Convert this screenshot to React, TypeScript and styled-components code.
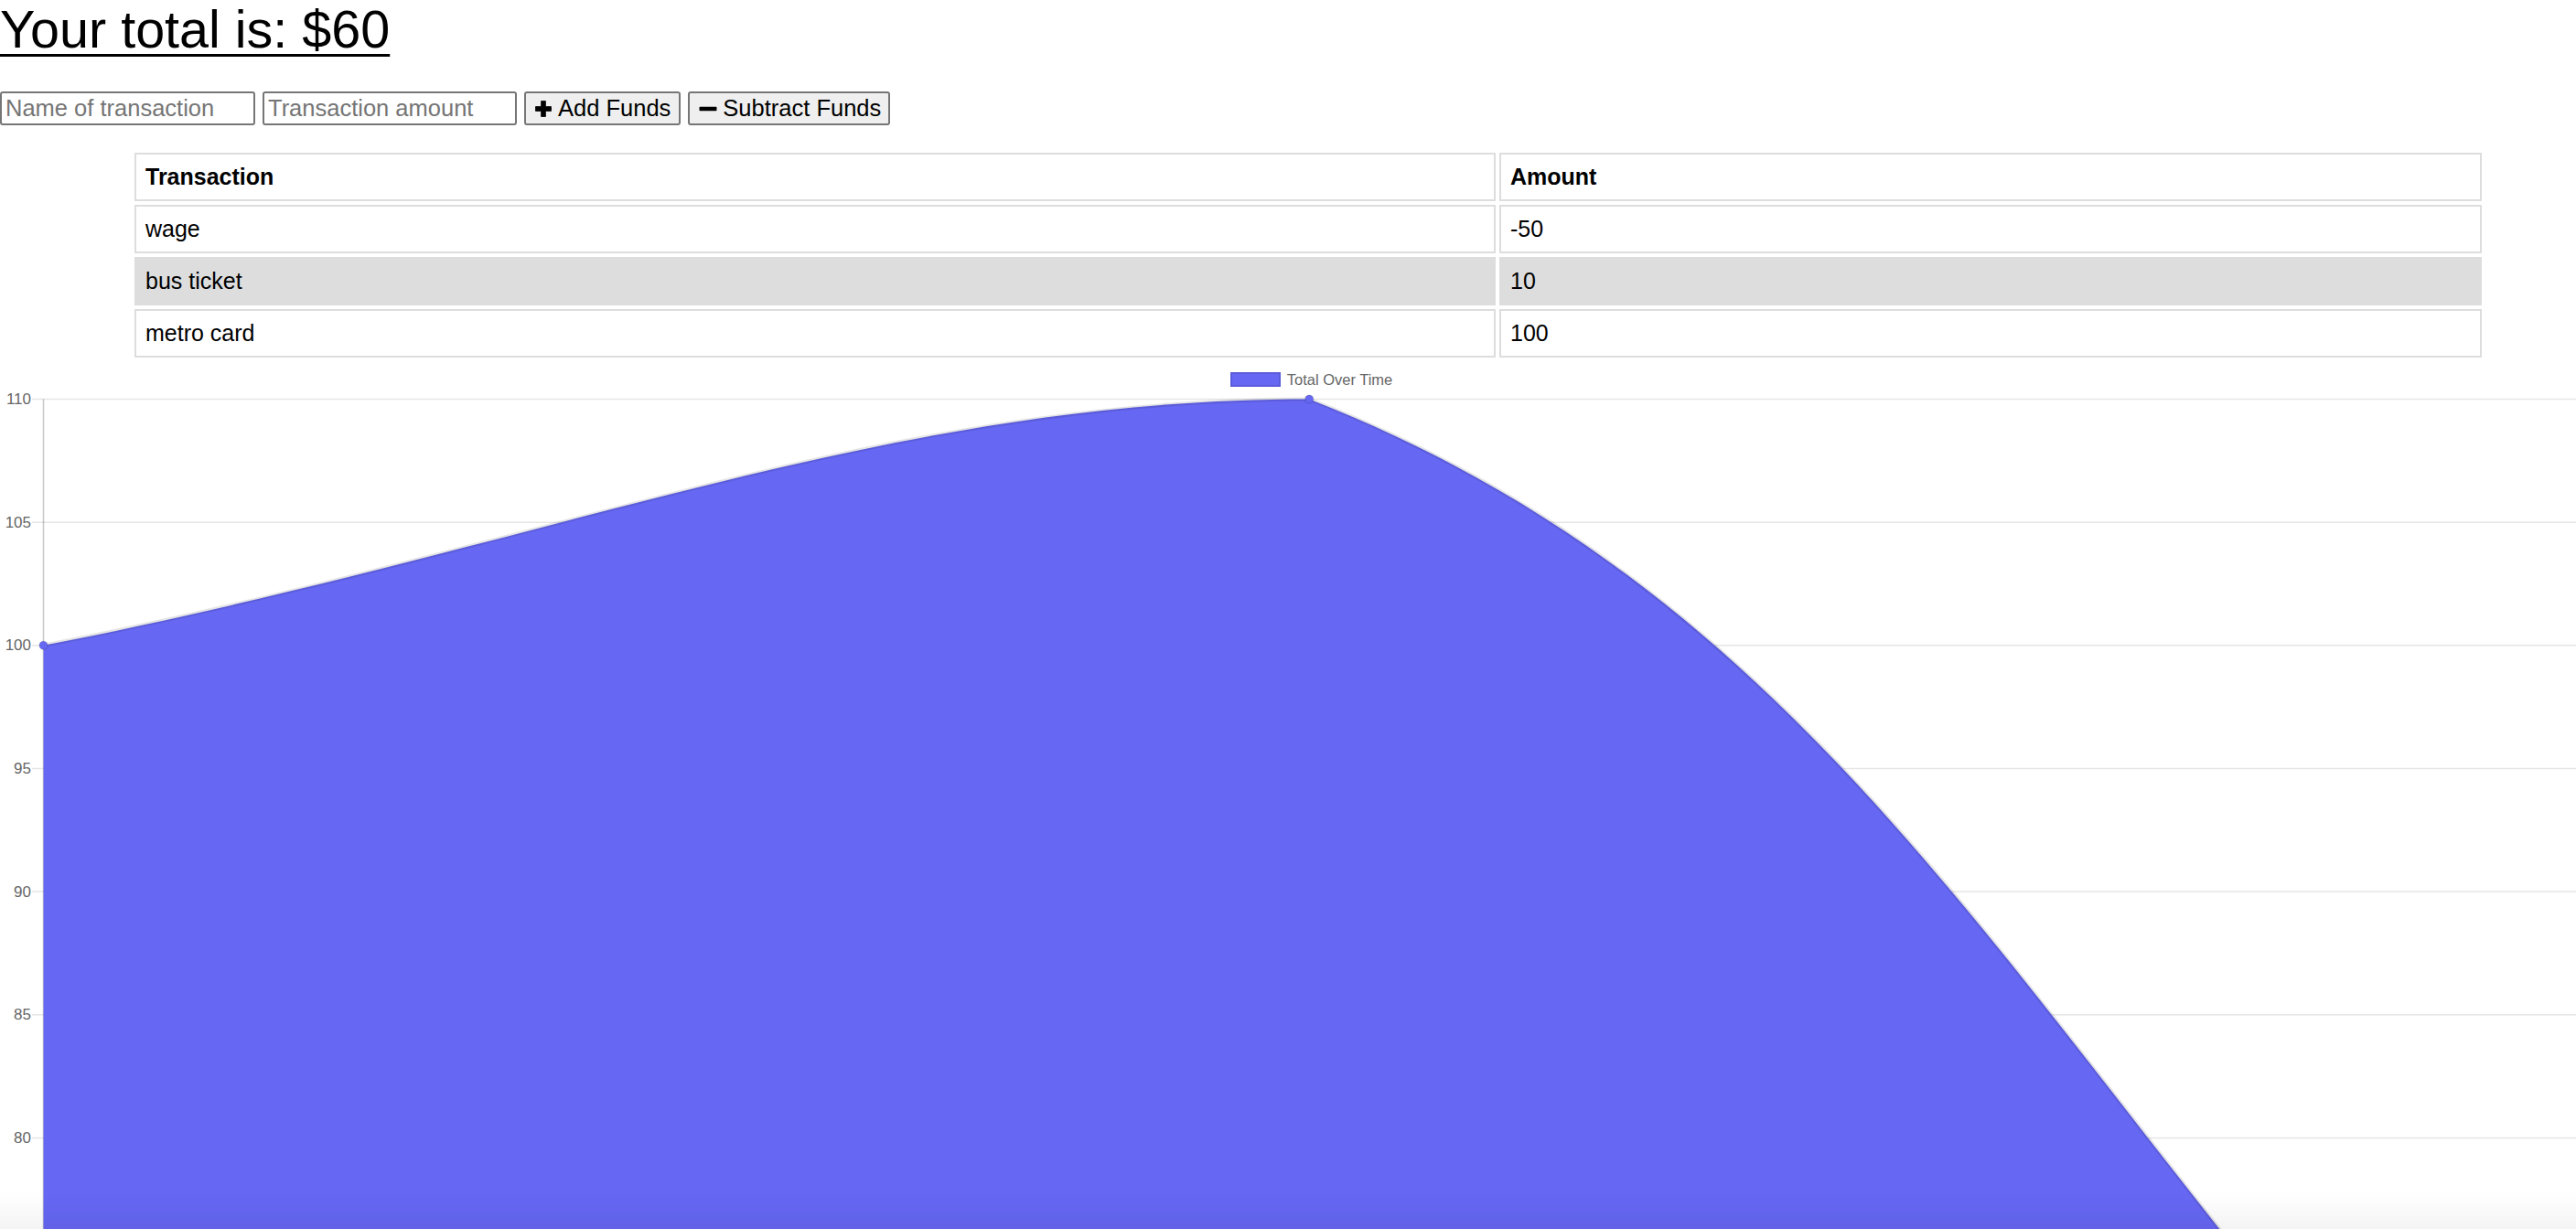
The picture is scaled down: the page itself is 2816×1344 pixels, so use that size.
import React from "react";
import styled, { createGlobalStyle } from "styled-components";

const GlobalStyle = createGlobalStyle`
  html, body {
    margin: 0;
    padding: 0;
    background: #ffffff;
    font-family: "Liberation Sans", Arial, Helvetica, sans-serif;
    color: #000000;
  }
  body { overflow: hidden; }
`;

const Page = styled.div`
  display: flex;
  flex-direction: column;
  height: 100vh;
  overflow: hidden;
`;

const Title = styled.h1`
  margin: 0 0 36px 0;
  font-size: 57.5px;
  line-height: 64px;
  font-weight: 400;
  text-decoration: underline;
  text-decoration-thickness: 3px;
  text-underline-offset: 7px;
`;

const Form = styled.div`
  display: flex;
  gap: 8px;
  height: 37px;
`;

const TextInput = styled.input<{ $w: number }>`
  box-sizing: border-box;
  width: ${(p) => p.$w}px;
  height: 37px;
  margin: 0;
  padding: 0 4px;
  border: 2px solid #767676;
  border-radius: 3px;
  font-family: "Liberation Sans", Arial, sans-serif;
  font-size: 25.5px;
  color: #000;
  background: #fff;
  &::placeholder { color: #757575; }
`;

const Button = styled.button<{ $pl: number; $pr: number }>`
  box-sizing: border-box;
  height: 37px;
  margin: 0;
  padding: 0 ${(p) => p.$pr}px 0 ${(p) => p.$pl}px;
  display: inline-flex;
  align-items: center;
  gap: 6px;
  border: 2px solid #767676;
  border-radius: 3px;
  background: #efefef;
  font-family: "Liberation Sans", Arial, sans-serif;
  font-size: 25.5px;
  color: #000;
  cursor: pointer;
`;

const Icon = styled.svg`
  display: block;
  flex: none;
`;

const Table = styled.table`
  margin: 26px 0 0 143px;
  width: 2574px;
  border-spacing: 4px;
  table-layout: fixed;
  font-size: 25px;

  tbody tr:nth-child(even) {
    background: #dddddd;
  }
`;

const HeadCell = styled.th<{ $w: number }>`
  box-sizing: border-box;
  width: ${(p) => p.$w}px;
  height: 53px;
  padding: 0 12px 0 10px;
  border: 2px solid #dddddd;
  text-align: left;
  font-weight: 700;
  line-height: 29px;
`;

const Cell = styled.td`
  box-sizing: border-box;
  height: 53px;
  padding: 0 12px 0 10px;
  border: 2px solid #dddddd;
  text-align: left;
  line-height: 29px;
`;

const ChartSection = styled.section`
  display: flex;
  flex-direction: column;
  flex: 1;
  min-height: 0;
`;

const Legend = styled.div`
  display: flex;
  justify-content: center;
  align-items: center;
  gap: 7px;
  padding: 12px 0 7px 51px;
  font-family: "Liberation Sans", Arial, sans-serif;
  font-size: 16.5px;
  color: #666666;
`;

const LegendBox = styled.span`
  box-sizing: border-box;
  width: 55px;
  height: 16px;
  background: #6667f3;
  border: 2px solid rgba(0, 0, 0, 0.1);
`;

const LegendLabel = styled.span`
  line-height: 16px;
`;

const Plot = styled.svg`
  display: block;
  flex: none;
  overflow: visible;
`;

const BottomShade = styled.div`
  position: fixed;
  left: 0;
  right: 0;
  bottom: 0;
  height: 40px;
  pointer-events: none;
  background: linear-gradient(to bottom, rgba(0, 0, 0, 0), rgba(0, 0, 0, 0.045));
`;

const rows = [
  { name: "wage", amount: "-50" },
  { name: "bus ticket", amount: "10" },
  { name: "metro card", amount: "100" },
];

const TOP = 6.5;
const UNIT = 26.93;
const yOf = (v: number) => TOP + (110 - v) * UNIT;
const AXIS_X = 47.5;
const ticks = [110, 105, 100, 95, 90, 85, 80];

function Chart() {
  const p0 = { x: AXIS_X, y: yOf(100) };
  const p1 = { x: 1431.2, y: yOf(110) };
  const p2 = { x: 2815, y: yOf(60) };
  const line = `M${p0.x},${p0.y} C601,168.1 964,${TOP} ${p1.x},${p1.y} C2071,255.6 2261.5,814.4 ${p2.x},${p2.y}`;
  const area = `${line} L${p2.x},${p2.y + 60} L${p0.x},${p2.y + 60} Z`;
  return (
    <Plot width={2816} height={1420} viewBox="0 0 2816 1420">
      {ticks.map((t) => (
        <g key={t}>
          <line x1={35} x2={2816} y1={yOf(t)} y2={yOf(t)} stroke="rgba(0,0,0,0.1)" strokeWidth={1.5} />
          <text
            x={34}
            y={yOf(t)}
            textAnchor="end"
            dominantBaseline="central"
            fontFamily='"Liberation Sans", Arial, sans-serif'
            fontSize={17}
            fill="#666666"
          >
            {t}
          </text>
        </g>
      ))}
      <line x1={AXIS_X} x2={AXIS_X} y1={TOP} y2={1420} stroke="rgba(0,0,0,0.22)" strokeWidth={1.5} />
      <path d={area} fill="#6667f3" />
      <path d={line} fill="none" stroke="rgba(0,0,0,0.1)" strokeWidth={4} />
      <circle cx={p0.x} cy={p0.y} r={4.5} fill="#6667f3" stroke="rgba(0,0,0,0.1)" strokeWidth={1.5} />
      <circle cx={p1.x} cy={p1.y} r={4.5} fill="#6667f3" stroke="rgba(0,0,0,0.1)" strokeWidth={1.5} />
    </Plot>
  );
}

export default function App() {
  return (
    <Page>
      <GlobalStyle />
      <Title>Your total is: $60</Title>
      <Form>
        <TextInput $w={279} type="text" placeholder="Name of transaction" />
        <TextInput $w={278} type="number" placeholder="Transaction amount" />
        <Button $pl={9} $pr={9}>
          <Icon width={20} height={20} viewBox="0 0 20 20">
            <path
              d="M7.6 1.5h4.8v6.1h6.1v4.8h-6.1v6.1H7.6v-6.1H1.5V7.6h6.1z"
              fill="#000"
              strokeLinejoin="round"
              stroke="#000"
              strokeWidth={0.8}
            />
          </Icon>
          Add Funds
        </Button>
        <Button $pl={8} $pr={8}>
          <Icon width={22} height={20} viewBox="0 0 22 20">
            <rect x={2.5} y={7.7} width={19} height={4.6} rx={0.8} fill="#000" />
          </Icon>
          Subtract Funds
        </Button>
      </Form>
      <Table>
        <thead>
          <tr>
            <HeadCell $w={1488}>Transaction</HeadCell>
            <HeadCell $w={1074}>Amount</HeadCell>
          </tr>
        </thead>
        <tbody>
          {rows.map((r) => (
            <tr key={r.name}>
              <Cell>{r.name}</Cell>
              <Cell>{r.amount}</Cell>
            </tr>
          ))}
        </tbody>
      </Table>
      <ChartSection>
        <Legend>
          <LegendBox />
          <LegendLabel>Total Over Time</LegendLabel>
        </Legend>
        <Chart />
      </ChartSection>
      <BottomShade />
    </Page>
  );
}
